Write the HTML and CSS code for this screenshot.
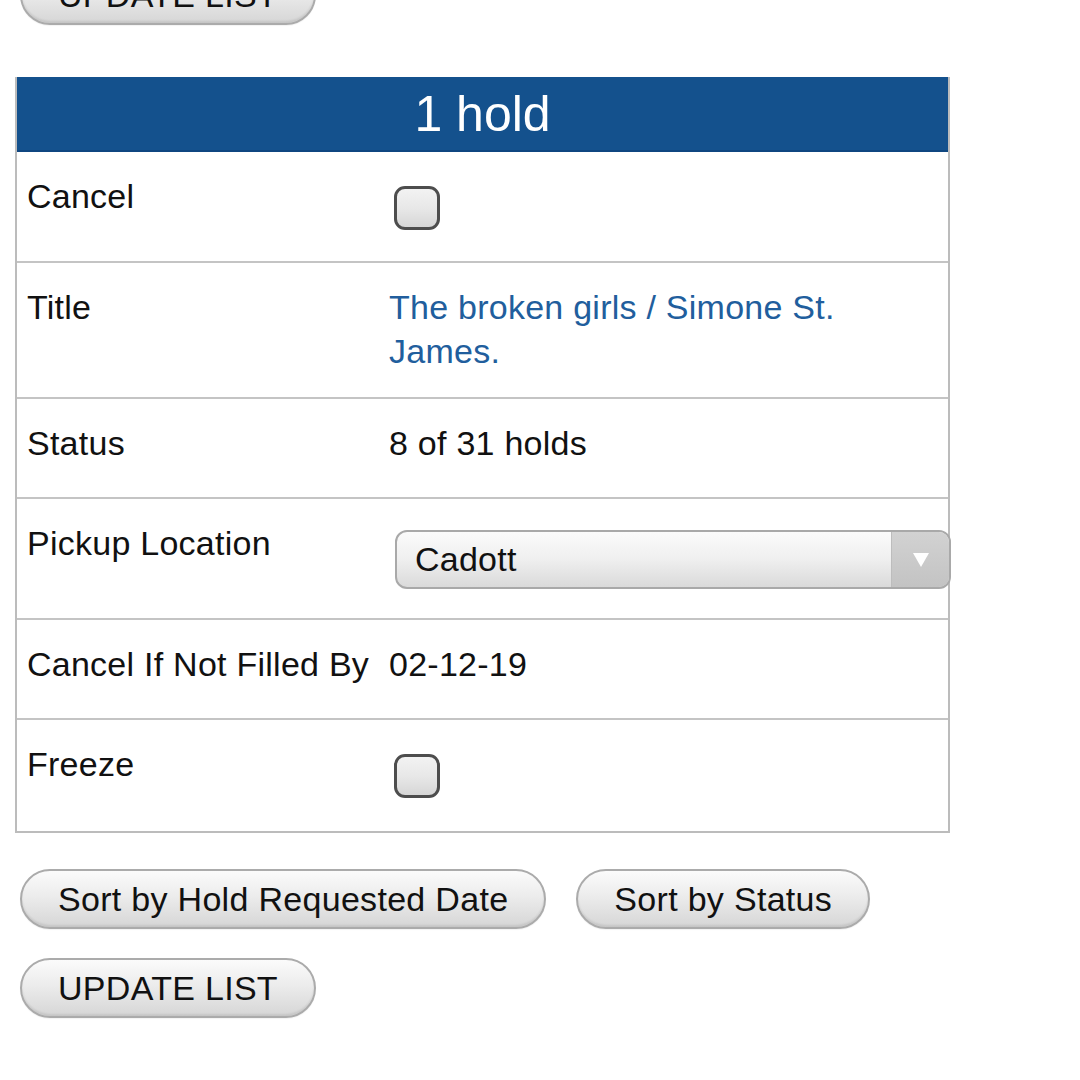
FILE: index.html
```html
<!DOCTYPE html>
<html>
<head>
<meta charset="utf-8">
<link rel="stylesheet" href="styles.css">
</head>
<body>
<div class="page">
  <div class="actions actions--top">
    <button class="pill">UPDATE LIST</button>
  </div>

  <div class="holds">
    <div class="holds__head">1 hold</div>

    <div class="row row--check">
      <div class="cell label">Cancel</div>
      <div class="cell value"><span class="checkbox"></span></div>
    </div>

    <div class="row row--title">
      <div class="cell label">Title</div>
      <div class="cell value"><a class="title-link">The broken girls / Simone St. James.</a></div>
    </div>

    <div class="row">
      <div class="cell label">Status</div>
      <div class="cell value">8 of 31 holds</div>
    </div>

    <div class="row row--select">
      <div class="cell label">Pickup Location</div>
      <div class="cell value">
        <div class="select">
          <span class="select__text">Cadott</span>
          <span class="select__arrow"><span class="tri"></span></span>
        </div>
      </div>
    </div>

    <div class="row">
      <div class="cell label">Cancel If Not Filled By</div>
      <div class="cell value">02-12-19</div>
    </div>

    <div class="row row--check row--last">
      <div class="cell label">Freeze</div>
      <div class="cell value"><span class="checkbox"></span></div>
    </div>
  </div>

  <div class="actions actions--sort">
    <button class="pill">Sort by Hold Requested Date</button>
    <button class="pill">Sort by Status</button>
  </div>
  <div class="actions actions--update">
    <button class="pill">UPDATE LIST</button>
  </div>
</div>
</body>
</html>
```

FILE: styles.css
```css
html, body {
  margin: 0;
  padding: 0;
  background: #ffffff;
}

body {
  font-family: "Liberation Sans", Arial, Helvetica, sans-serif;
  color: #111111;
  font-size: 34px;
  line-height: 44px;
  letter-spacing: 0.25px;
  width: 1080px;
  height: 1080px;
  overflow: hidden;
}

.page {
  display: flex;
  flex-direction: column;
  align-items: flex-start;
}

.actions {
  display: flex;
  gap: 30px;
  padding-left: 20px;
}

.actions--top {
  margin-top: -35px;
}

.actions--sort {
  margin-top: 36px;
}

.actions--update {
  margin-top: 29px;
}

.pill {
  font-family: "Liberation Sans", Arial, Helvetica, sans-serif;
  font-size: 34px;
  line-height: 44px;
  letter-spacing: 0.3px;
  color: #111111;
  height: 60px;
  padding: 0 36px;
  border: 2px solid #ababab;
  border-radius: 30px;
  background: linear-gradient(to bottom, #fbfbfb 0%, #ececec 45%, #d6d6d6 100%);
  box-shadow: inset 0 -2px 2px rgba(0, 0, 0, 0.08), 0 1px 1px rgba(0, 0, 0, 0.05);
  cursor: pointer;
  white-space: nowrap;
}

.holds {
  margin-left: 15px;
  margin-top: 52px;
  width: 935px;
  box-sizing: border-box;
  border: 2px solid #bcbcbc;
  border-top: none;
}

.holds__head {
  height: 75px;
  background: #14518d;
  border-bottom: 2px solid #0f4680;
  box-sizing: border-box;
  color: #ffffff;
  font-size: 50px;
  line-height: 75px;
  letter-spacing: 0;
  text-align: center;
}

.row {
  display: grid;
  grid-template-columns: 362px minmax(0, 1fr);
  border-bottom: 2px solid #c4c4c4;
  padding: 22px 0 32px;
}

.row--check {
  padding-bottom: 31px;
}

.row--title {
  padding-bottom: 24px;
}

.row--select {
  padding-bottom: 29px;
}

.row--last {
  border-bottom: none;
  padding-bottom: 33px;
}

.cell {
  padding: 0 10px;
}

.label {
  white-space: nowrap;
}

.checkbox {
  display: block;
  width: 46px;
  height: 44px;
  box-sizing: border-box;
  margin: 12px 0 0 5px;
  border: 3px solid #4d4d4d;
  border-radius: 11px;
  background: linear-gradient(to bottom, #f2f2f2 0%, #e8e8e8 50%, #d6d6d6 100%);
}

.title-link {
  color: #215e9d;
  text-decoration: none;
}

.select {
  display: flex;
  align-items: stretch;
  width: 556px;
  height: 59px;
  box-sizing: border-box;
  margin: 9px 0 0 6px;
  border: 2px solid #a9a9a9;
  border-radius: 12px;
  background: linear-gradient(to bottom, #fbfbfb 0%, #efefef 50%, #dadada 100%);
  overflow: hidden;
}

.select__text {
  flex: 1;
  padding-left: 18px;
  line-height: 55px;
  color: #111111;
}

.select__arrow {
  width: 57px;
  display: flex;
  align-items: center;
  justify-content: center;
  background: linear-gradient(to bottom, #d2d2d2 0%, #c3c3c3 100%);
  border-left: 1px solid #bdbdbd;
}

.tri {
  width: 0;
  height: 0;
  border-left: 8px solid transparent;
  border-right: 8px solid transparent;
  border-top: 14px solid #ffffff;
}
```
